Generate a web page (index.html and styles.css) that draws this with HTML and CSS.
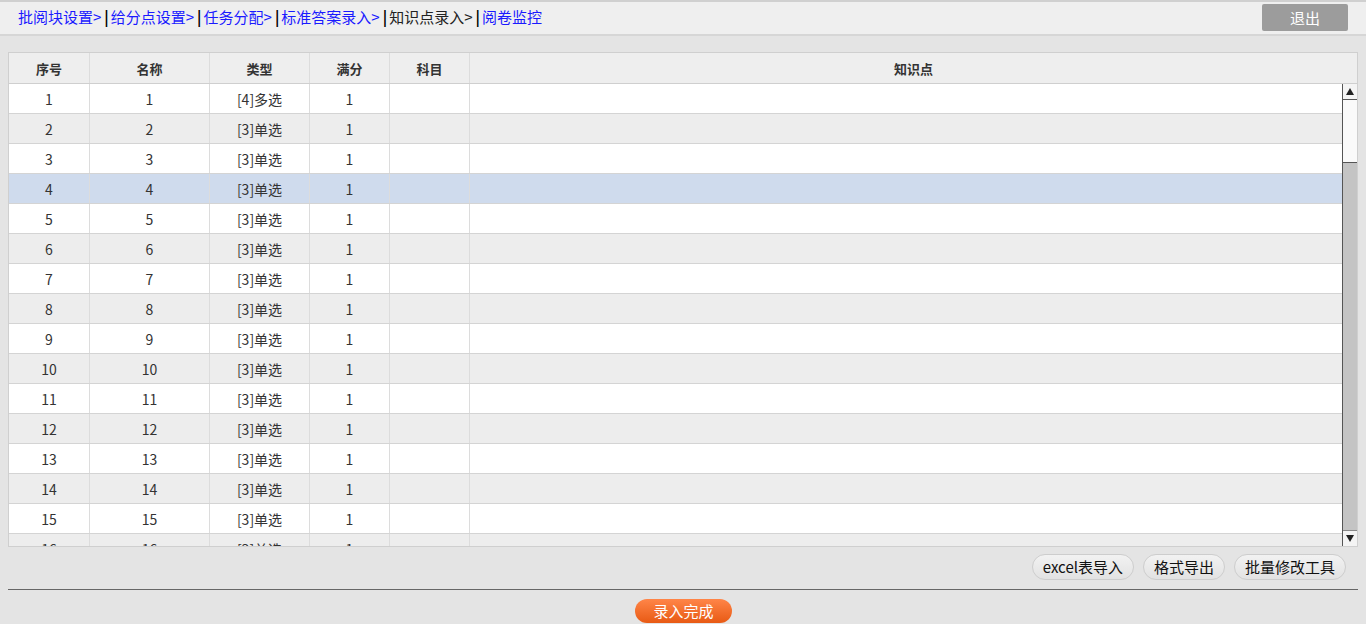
FILE: index.html
```html
<!DOCTYPE html>
<html lang="zh">
<head>
<meta charset="utf-8">
<title>知识点录入</title>
<link rel="stylesheet" href="styles.css">
</head>
<body>
<div class="topbar">
  <nav class="crumbs">
    <a class="link">批阅块设置&gt;</a><span class="sep">|</span><a class="link">给分点设置&gt;</a><span class="sep">|</span><a class="link">任务分配&gt;</a><span class="sep">|</span><a class="link">标准答案录入&gt;</a><span class="sep">|</span><span class="cur">知识点录入&gt;</span><span class="sep">|</span><a class="link">阅卷监控</a>
  </nav>
  <button class="logout">退出</button>
</div>
<main class="content">
  <div class="grid">
    <div class="row head">
      <div class="c c1">序号</div><div class="c c2">名称</div><div class="c c3">类型</div><div class="c c4">满分</div><div class="c c5">科目</div><div class="c c6">知识点</div>
    </div>
    <div class="bodywrap">
      <div class="rows" id="rows"></div>
      <div class="scrollbar">
        <div class="sb-btn"><span class="tri up"></span></div>
        <div class="sb-thumb"></div>
        <div class="sb-track"></div>
        <div class="sb-btn"><span class="tri down"></span></div>
      </div>
    </div>
  </div>
  <div class="tools">
    <button class="pill">excel表导入</button>
    <button class="pill">格式导出</button>
    <button class="pill">批量修改工具</button>
  </div>
  <div class="divider"></div>
  <div class="submit-row"><button class="submit">录入完成</button></div>
</main>
<script>
  var rows = document.getElementById('rows');
  var html = '';
  for (var i = 1; i <= 16; i++) {
    var cls = 'row' + (i % 2 === 0 ? ' alt' : '') + (i === 4 ? ' sel' : '');
    var type = i === 1 ? '[4]多选' : '[3]单选';
    html += '<div class="' + cls + '"><div class="c c1">' + i + '</div><div class="c c2">' + i + '</div><div class="c c3">' + type + '</div><div class="c c4">1</div><div class="c c5"></div><div class="c c6"></div></div>';
  }
  rows.innerHTML = html;
</script>
</body>
</html>
```

FILE: styles.css
```css
* { box-sizing: border-box; }
html, body { margin: 0; padding: 0; }
body {
  background: #e4e4e4;
  font-family: "Noto Sans CJK SC", "Noto Sans", sans-serif;
  font-size: 14px;
  color: #333;
  width: 1366px;
  height: 624px;
  overflow: hidden;
}
.topbar {
  height: 36px;
  background: #efefef;
  border-top: 2px solid #d0d0d0;
  border-bottom: 2px solid #d6d6d6;
  display: flex;
  align-items: center;
  justify-content: space-between;
  padding: 0 18px 0 18px;
}
.crumbs { font-size: 15px; line-height: 20px; margin-top: -2px; white-space: nowrap; }
.link { color: #1a1aff; }
.cur { color: #222; }
.sep { color: #000; font-weight: bold; margin: 0 2px 0 3px; }
.logout {
  width: 86px;
  height: 27px;
  background: #9c9c9c;
  border: none;
  border-radius: 2px;
  color: #fff;
  font-family: inherit;
  font-size: 15px;
  padding: 0;
  margin-top: -1px;
}
.content { padding: 16px 8px 0 8px; }
.grid {
  border: 1px solid #cfcfcf;
  background: #fff;
  width: 1350px;
}
.row { display: flex; height: 30px; border-bottom: 1px solid #d4d4d4; background: #fff; }
.row.alt { background: #ededed; }
.row.sel { background: #cfdbed; }
.row.head { height: 31px; background: #eeeeee; border-bottom: 1px solid #cfcfcf; font-weight: bold; font-size: 13px; color: #333; }
.c {
  display: flex;
  align-items: center;
  justify-content: center;
  border-right: 1px solid #dcdcdc;
  flex: none;
}
.c1 { width: 81px; }
.c2 { width: 120px; }
.c3 { width: 100px; }
.c4 { width: 80px; }
.c5 { width: 80px; }
.c6 { flex: 1; border-right: none; }
.bodywrap { display: flex; height: 462px; overflow: hidden; }
.rows { flex: 1; overflow: hidden; }
.scrollbar {
  width: 15px;
  flex: none;
  display: flex;
  flex-direction: column;
  border-left: 1px solid #555;
  background: #c4c4c4;
}
.sb-btn {
  height: 16px;
  background: #f4f4f4;
  display: flex;
  align-items: center;
  justify-content: center;
  border-bottom: 1px solid #555;
}
.sb-btn:last-child { border-bottom: none; border-top: 1px solid #888; }
.sb-thumb { height: 63px; background: #fafafa; border-bottom: 1px solid #555; }
.sb-track { flex: 1; background: #c4c4c4; }
.tri { width: 0; height: 0; border-left: 4px solid transparent; border-right: 4px solid transparent; }
.tri.up { border-bottom: 7px solid #222; }
.tri.down { border-top: 7px solid #222; }
.tools {
  display: flex;
  justify-content: flex-end;
  gap: 9px;
  padding: 7px 12px 0 0;
  height: 42px;
}
.pill {
  height: 26px;
  padding: 0 10px;
  border: 1px solid #cdcdcd;
  border-radius: 13px;
  background: linear-gradient(#f2f2f2, #e2e2e2);
  font-family: inherit;
  font-size: 15px;
  line-height: 22px;
  color: #111;
}
.divider { height: 1px; background: #666; }
.submit-row { display: flex; justify-content: center; padding-top: 9px; }
.submit {
  width: 97px;
  height: 24px;
  border: none;
  border-radius: 12px;
  background: linear-gradient(#ff8548, #e85a14);
  color: #fff;
  font-family: inherit;
  font-size: 15px;
  line-height: 20px;
  padding: 0;
  margin-left: 1px;
}
```
